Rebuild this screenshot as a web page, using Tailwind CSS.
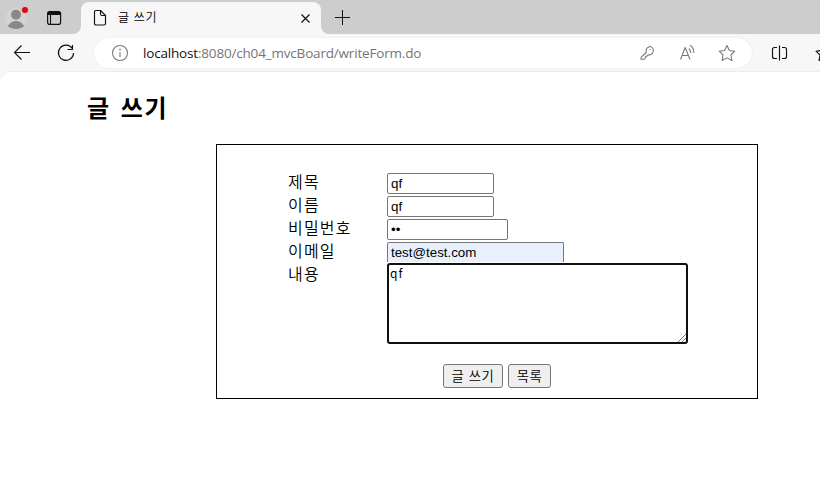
<!DOCTYPE html>
<html lang="ko">
<head>
<meta charset="utf-8">
<title>글 쓰기</title>
<script src="https://cdn.jsdelivr.net/npm/@tailwindcss/browser@4"></script>
</head>
<body class="w-[820px] h-[485px] overflow-hidden bg-[#f7f7f7] font-['Noto_Sans_CJK_KR',sans-serif] text-black">
<header>
  <div class="flex h-[34px]">
    <div class="w-[81px] h-[34px] bg-[#cdcdcd] rounded-br-lg shrink-0 flex">
      <svg class="w-[81px] h-[34px]" viewBox="0 0 81 34" fill="none">
        <circle cx="16" cy="18.500" r="10.500" fill="#d5d3d0"/>
        <circle cx="16" cy="14.800" r="5" fill="#8a8886"/>
        <path d="M8 26.500c1.300-3.300 4.500-5.500 8-5.500s6.700 2.200 8 5.500c-4.500 3.300-11.500 3.300-16 0z" fill="#8a8886"/>
        <circle cx="25" cy="10" r="3.600" fill="#d40b12" stroke="#dedede" stroke-width=".8"/>
        <rect x="47.600" y="11.600" width="13" height="12.800" rx="2.200" stroke="#111" stroke-width="1.200"/>
        <path d="M47.500 15v-1.300q0-2.200 2.200-2.200h8.800q2.200 0 2.200 2.200V15z" fill="#111"/>
        <path d="M50.500 14v10" stroke="#111" stroke-width="1.100"/>
      </svg>
    </div>
    <div class="w-[240px] h-[34px] bg-[#cdcdcd] shrink-0 pt-0.5">
      <div class="h-8 bg-[#f7f7f7] rounded-t-lg flex items-center pl-3 pr-[10px]">
        <svg class="w-[14px] h-[18px] shrink-0" viewBox="0 0 14 18" fill="none" stroke="#111" stroke-width="1.150" stroke-linejoin="round"><path d="M3 1.500h4.500L12.500 6.500v8q0 1.500-1.500 1.500H3q-1.500 0-1.500-1.500V3Q1.500 1.500 3 1.500zM7.500 1.500V5q0 1.500 1.500 1.500h3.500"/></svg>
        <span class="ml-[11px] text-[12px] leading-4 flex-1 relative -top-px whitespace-nowrap tracking-[0.7px] font-[350]">글 쓰기</span>
        <svg class="w-[11px] h-[11px]" viewBox="0 0 11 11" stroke="#111" stroke-width="1.200"><path d="M1.500 1.500l8 8M9.500 1.500l-8 8"/></svg>
      </div>
    </div>
    <div class="flex-1 h-[34px] bg-[#cdcdcd] rounded-bl-lg pl-[14px] pt-[10px]">
      <svg class="w-[15px] h-[15px]" viewBox="0 0 15 15" stroke="#111" stroke-width="1"><path d="M7.500 0v15M0 7.500h15"/></svg>
    </div>
  </div>
  <div class="flex h-[37px] pt-1">
    <svg class="w-[94px] h-[30px] shrink-0" viewBox="0 38 94 30" fill="none" stroke="#111" stroke-width="1.150">
      <path d="M21.500 45.500L14.500 52.500L21.500 59.500M14.500 52.500H30"/>
      <path d="M72.300 48.500A7.600 7.600 0 1 0 73.600 53M72.500 45v4.500h-5"/>
    </svg>
    <div class="w-[658px] h-[30px] rounded-full bg-white shadow-[0_0_2px_#e2e2e2] shrink-0 flex items-center pl-[17px]">
      <svg class="w-[18px] h-[18px] shrink-0" viewBox="0 0 18 18" fill="none" stroke="#747474" stroke-width="1.050"><circle cx="9" cy="9" r="7.500"/><path d="M9 8v5"/><circle cx="9" cy="5.600" r=".35" fill="#747474"/></svg>
      <span class="ml-[14px] w-[490px] font-['Open_Sans',sans-serif] text-[13.500px] tracking-[-0.18px] leading-5 whitespace-nowrap text-[#757575]"><span class="text-[#111]">localhost</span>:8080/ch04_mvcBoard/writeForm.do</span>
      <svg class="w-[110px] h-[30px] shrink-0" viewBox="633 38 110 30" fill="none" stroke="#777" stroke-width="1.050" stroke-linejoin="round">
        <path d="M646.300 52.500C645 46.500 651.500 44.700 653.200 49C654.300 52.700 651 55.500 648.400 54.700L647 56.200H645.600V57.700L644 59.300H641V57.300z"/>
        <circle cx="650.300" cy="49.500" r=".6" fill="#777" stroke="none"/>
        <path d="M680.500 59.500L685.200 47.500L690 59.500M682.200 55.500h6.200M688.800 48.500q2 1.500 1.800 4.500M690 45.300q4 2.500 3.800 7.700"/>
        <path d="M727 45.500L729.400 50.500L734.800 51.200L730.900 55L731.900 60.500L727 57.900L722.100 60.500L723.100 55L719.200 51.200L724.600 50.500z"/>
      </svg>
    </div>
    <svg class="w-[68px] h-[30px] shrink-0" viewBox="752 38 68 30" fill="none" stroke="#111" stroke-width="1.150" stroke-linejoin="round">
      <path d="M777 47.500h-2.500q-2 0-2 2v7q0 2 2 2h2.500M782 47.500h2.500q2 0 2 2v7q0 2-2 2h-2.500M779.500 45.500v15"/>
      <path d="M824 45.500L821.500 50.500L816 51.200L820 55L819 60.500L824 58"/>
    </svg>
  </div>
</header>
<main class="h-[414px] bg-white rounded-tl-xl border-t border-[#ededed] pt-[18px]">
  <h2 class="ml-[87px] h-[34px] leading-[34px] text-[24px] font-bold tracking-[1.500px] [word-spacing:2px]">글 쓰기</h2>
  <form class="ml-[216px] mt-5 w-[542px] h-[255px] border border-black pt-7 pl-[71px]">
    <div class="grid grid-cols-[99px_301px] auto-rows-[23px] text-[16px] leading-5">
      <label class="-mt-[2px] font-[350] tracking-[1.200px]">제목</label>
      <input class="w-[107px] h-[21px] border border-[#767676] rounded-xs px-[3px] text-[13.333px] font-['Liberation_Sans',sans-serif]" value="qf">
      <label class="-mt-[2px] font-[350] tracking-[1.200px]">이름</label>
      <input class="w-[107px] h-[21px] border border-[#767676] rounded-xs px-[3px] text-[13.333px] font-['Liberation_Sans',sans-serif]" value="qf">
      <label class="-mt-[2px] font-[350] tracking-[1.200px]">비밀번호</label>
      <input type="password" class="w-[121px] h-[21px] border border-[#767676] rounded-xs px-[3px] text-[13.333px] font-['Liberation_Sans',sans-serif]" value="qf">
      <label class="-mt-[2px] font-[350] tracking-[1.200px]">이메일</label>
      <input class="w-[177px] h-[20px] border border-b-0 border-[#767676] rounded-t-xs px-[3px] text-[13.333px] font-['Liberation_Sans',sans-serif] bg-[#e8f0fe]" value="test@test.com">
      <label class="-mt-[2px] font-[350] tracking-[1.200px]">내용</label>
      <div class="relative -mt-[2px] h-[81px]">
        <textarea class="block w-[301px] h-[81px] resize-none border-2 border-[#101010] rounded-[3px] bg-white px-[1px] pt-0 text-[12px] leading-4 font-['Noto_Sans_CJK_KR',sans-serif] tracking-[1px]">qf</textarea>
        <svg class="absolute right-[2px] bottom-[2px] w-2 h-2" viewBox="0 0 8 8" stroke="#666" stroke-width=".9"><path d="M0 8L8 0M4 8L8 4"/></svg>
      </div>
    </div>
    <div class="mt-[76px] ml-[155px] flex gap-[5px] text-[13.333px] font-[350] tracking-[0.600px]">
      <button type="button" class="w-[60px] h-6 border border-[#767676] rounded-[3px] bg-[#efefef] leading-[22px] whitespace-nowrap">글 쓰기</button>
      <button type="button" class="w-[43px] h-6 border border-[#767676] rounded-[3px] bg-[#efefef] leading-[22px] whitespace-nowrap">목록</button>
    </div>
  </form>
</main>
</body>
</html>
